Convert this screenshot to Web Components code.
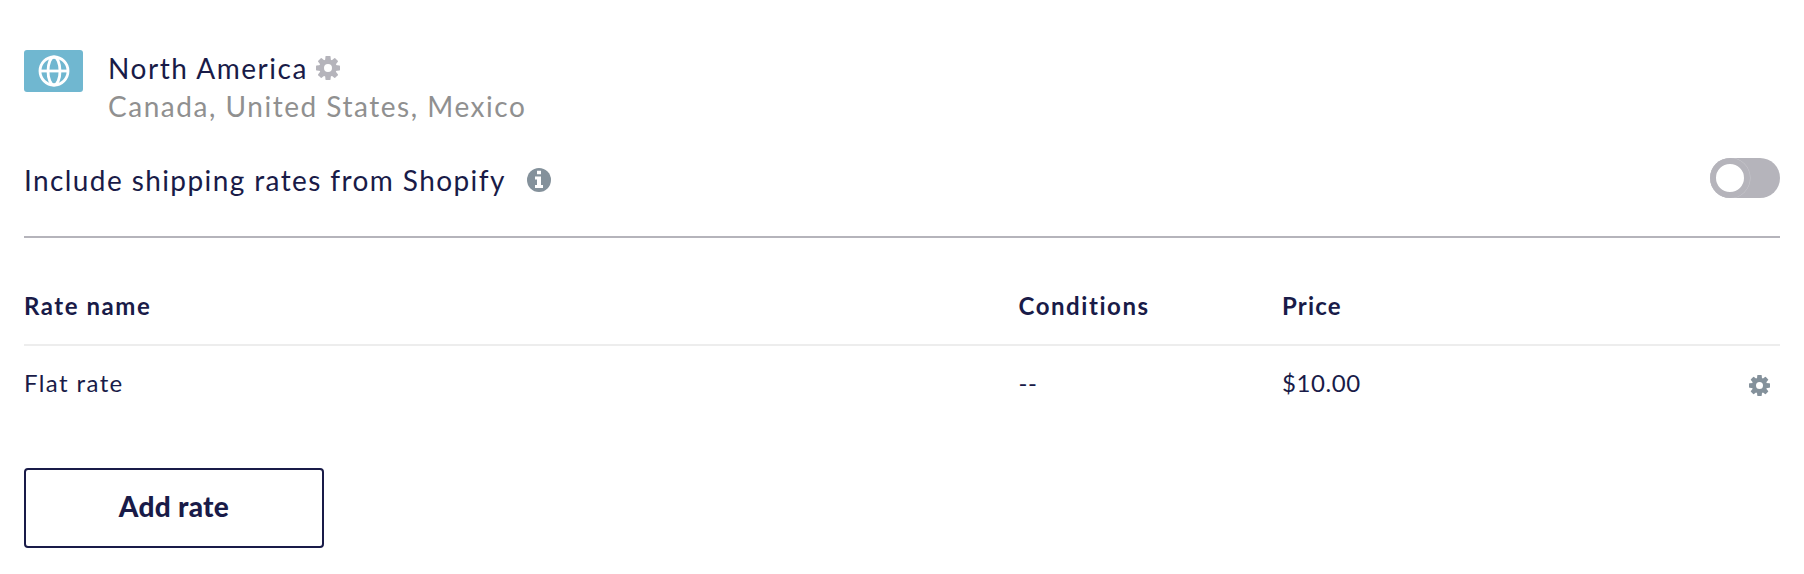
<!DOCTYPE html>
<html lang="en">
  <head>
    <meta charset="utf-8" />
    <meta name="viewport" content="width=device-width, initial-scale=1" />
    <title>Shipping rates</title>
    <style>
      body {
        margin: 0;
        background-color: #fff;
        color: #191b48;
        font-family: Lato, "Open Sans", sans-serif;
        font-size: 28px;
      }
    </style>
  </head>
  <body>
    <shipping-zone>
      <zone-header>
        North America
        <span slot="countries">Canada, United States, Mexico</span>
      </zone-header>
      <toggle-row>Include shipping rates from Shopify</toggle-row>
      <rate-table>
        <rate-row heading>
          <span slot="name">Rate name</span>
          <span slot="conditions">Conditions</span>
          <span slot="price">Price</span>
        </rate-row>
        <rate-row>
          <span slot="name">Flat rate</span>
          <span slot="conditions">--</span>
          <span slot="price">$10.00</span>
          <gear-icon slot="action"></gear-icon>
        </rate-row>
      </rate-table>
      <outline-button>Add rate</outline-button>
    </shipping-zone>
    <script>
      class BaseElement extends HTMLElement {
        constructor() {
          super();
          this.attachShadow({ mode: "open" });
          this.shadowRoot.innerHTML = this.render();
        }
      }

      class ShippingZone extends BaseElement {
        render() {
          return `
            <style>
              :host {
                display: flex;
                flex-direction: column;
                padding: 48px 24px 0;
              }
            </style>
            <slot></slot>
          `;
        }
      }
      customElements.define("shipping-zone", ShippingZone);

      class GearIcon extends BaseElement {
        render() {
          const teeth = [0, 45, 90, 135, 180, 225, 270, 315]
            .map((angle) => `<path d="M-3 -7 L-2.5 -11.4 Q-2.4 -12 -1.8 -12 H1.8 Q2.4 -12 2.5 -11.4 L3 -7 Z" transform="rotate(${angle})"/>`)
            .join("");
          return `
            <style>
              :host {
                display: block;
                flex: none;
                width: var(--gear-size, 21px);
                height: var(--gear-size, 21px);
                color: var(--gear-color, #84919b);
              }
              svg {
                display: block;
                width: 100%;
                height: 100%;
              }
            </style>
            <svg viewBox="-12 -12 24 24" fill="currentColor">
              ${teeth}
              <circle r="6.4" fill="none" stroke="currentColor" stroke-width="4.8"/>
            </svg>
          `;
        }
      }
      customElements.define("gear-icon", GearIcon);

      class ZoneHeader extends BaseElement {
        render() {
          return `
            <style>
              :host {
                display: flex;
                gap: 25px;
                height: 110px;
                line-height: 38px;
              }
              .flag {
                display: flex;
                align-items: center;
                justify-content: center;
                width: 59px;
                height: 42px;
                margin-top: 2px;
                border-radius: 3px;
                background-color: #70b7d0;
              }
              .text {
                padding-top: 1px;
              }
              .name {
                display: flex;
                gap: 8px;
                letter-spacing: 1.55px;
              }
              .countries {
                color: #909090;
                letter-spacing: 1.53px;
              }
              gear-icon {
                --gear-size: 24px;
                --gear-color: #b5b4bb;
                margin-top: 7px;
              }
            </style>
            <div class="flag">
              <svg width="32" height="32" viewBox="0 0 32 32" fill="none" stroke="#fff" stroke-width="2.8">
                <circle cx="16" cy="16" r="14"/>
                <ellipse cx="16" cy="16" rx="6" ry="14"/>
                <path d="M2 16H30"/>
              </svg>
            </div>
            <div class="text">
              <div class="name"><span><slot></slot></span><gear-icon></gear-icon></div>
              <div class="countries"><slot name="countries"></slot></div>
            </div>
          `;
        }
      }
      customElements.define("zone-header", ZoneHeader);

      class ToggleRow extends BaseElement {
        render() {
          return `
            <style>
              :host {
                display: flex;
                align-items: flex-start;
                height: 78px;
                border-bottom: 2px solid #b5b4bb;
              }
              .label {
                line-height: 44px;
                letter-spacing: 1.4px;
              }
              .info {
                margin: 10px auto 0 21px;
              }
              .switch {
                box-sizing: border-box;
                width: 70px;
                height: 40px;
                border: none;
                border-radius: 20px;
                padding: 0;
                background-color: #b5b4bb;
                overflow: hidden;
              }
              .knob {
                display: block;
                box-sizing: border-box;
                width: 40px;
                height: 40px;
                border: 6px solid #b5b4bb;
                border-radius: 50%;
                background-color: #fff;
                box-shadow: 0 0 0 0.5px #c9c8ce;
              }
            </style>
            <span class="label"><slot></slot></span>
            <svg class="info" width="24" height="24" viewBox="0 0 24 24">
              <circle cx="12" cy="12" r="12" fill="#84919b"/>
              <path fill="#fff" d="M10 2.7h4v3.6h-4zM8 8.6h6v8.4h2v3H8v-3h2v-5.4H8z"/>
            </svg>
            <button class="switch" role="switch" aria-checked="false"><span class="knob"></span></button>
          `;
        }
      }
      customElements.define("toggle-row", ToggleRow);

      class RateTable extends BaseElement {
        render() {
          return `
            <style>
              :host {
                display: block;
                height: 230px;
                font-size: 24px;
                line-height: 36px;
              }
            </style>
            <slot></slot>
          `;
        }
      }
      customElements.define("rate-table", RateTable);

      class RateRow extends BaseElement {
        render() {
          return `
            <style>
              :host {
                display: grid;
                grid-template-columns: 994.5px 263.5px 1fr auto;
                padding: 19px 10px 0 0;
                letter-spacing: 1.4px;
              }
              :host([heading]) {
                padding: 50px 0 20px;
                border-bottom: 2px solid #ededed;
                font-weight: bold;
                letter-spacing: 1.55px;
              }
              :host(:not([heading])) ::slotted([slot="conditions"]),
              :host(:not([heading])) ::slotted([slot="price"]) {
                letter-spacing: 0.6px;
              }
              :host([heading]) ::slotted([slot="price"]) {
                letter-spacing: 1.2px;
              }
              ::slotted(gear-icon) {
                margin-top: 10px;
              }
            </style>
            <slot name="name"></slot>
            <slot name="conditions"></slot>
            <slot name="price"></slot>
            <slot name="action"></slot>
          `;
        }
      }
      customElements.define("rate-row", RateRow);

      class OutlineButton extends BaseElement {
        render() {
          return `
            <style>
              :host {
                display: block;
              }
              button {
                display: block;
                box-sizing: border-box;
                width: 300px;
                height: 80px;
                border: 2px solid #191b48;
                border-radius: 4px;
                padding: 0 0 5px;
                background-color: #fff;
                color: inherit;
                font: 900 28px Lato, sans-serif;
                letter-spacing: 0.3px;
                cursor: pointer;
              }
            </style>
            <button><slot></slot></button>
          `;
        }
      }
      customElements.define("outline-button", OutlineButton);
    </script>
  </body>
</html>
